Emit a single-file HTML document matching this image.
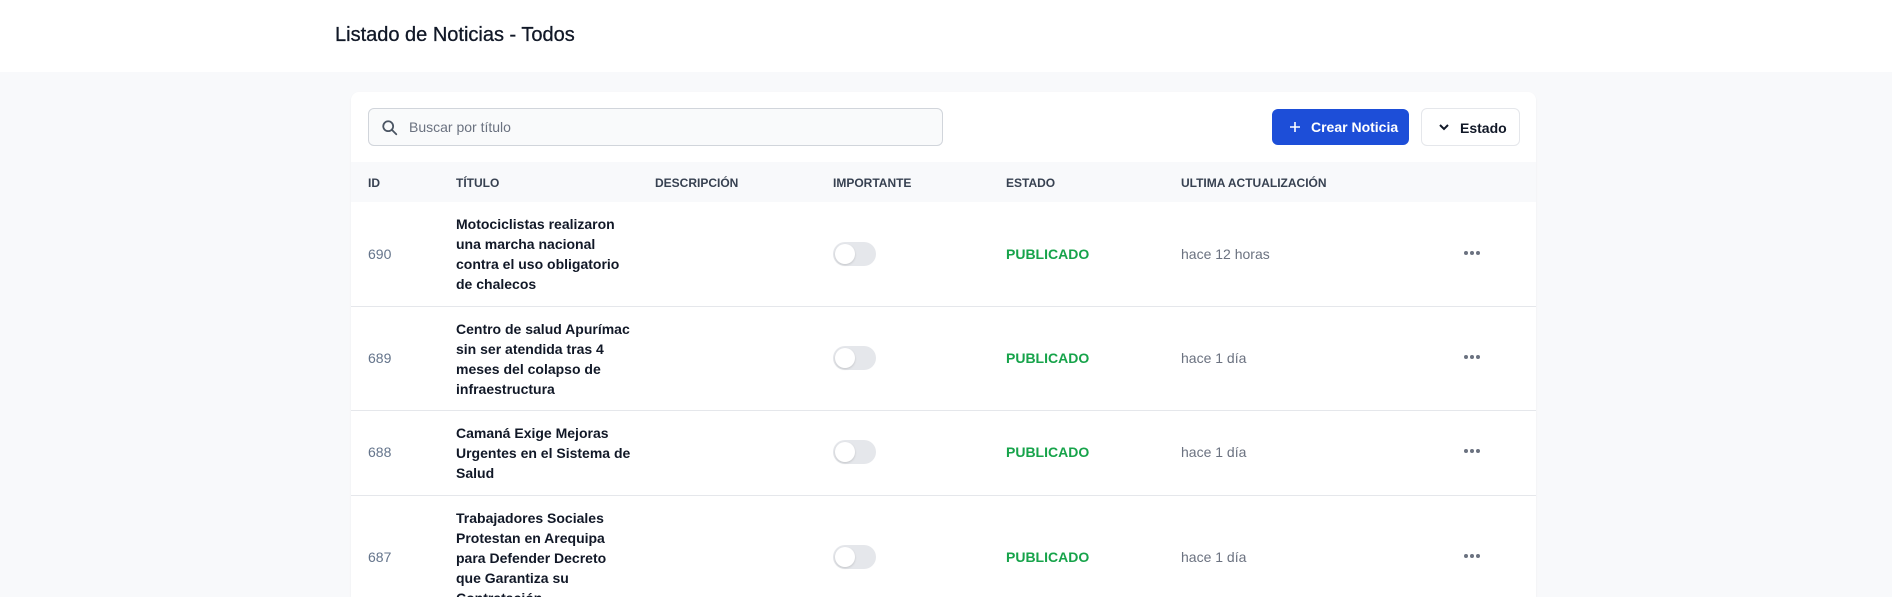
<!DOCTYPE html>
<html style="overflow:hidden;width:1892px;height:597px"><head><meta charset="utf-8"><style>
*{box-sizing:border-box;margin:0;padding:0}
body{width:1892px;height:597px;overflow:hidden;background:#f8f9fb;font-family:"Liberation Sans",sans-serif;position:relative}
.top{position:absolute;left:0;top:0;width:1892px;height:72px;background:#fff}
.top h1{position:absolute;left:335px;top:24px;font-size:20px;font-weight:normal;color:#111827;-webkit-text-stroke:0.3px #111827}
.card{position:absolute;left:351px;top:92px;width:1185px;height:505px;background:#fff;border-radius:8px 8px 0 0;box-shadow:0 1px 2px rgba(0,0,0,.05);overflow:hidden}
.search{position:absolute;left:17px;top:16px;width:575px;height:38px;border:1px solid #d1d5db;border-radius:6px;background:#f9fafb}
.search svg{position:absolute;left:12px;top:10px}
.search span{position:absolute;left:40px;top:10px;font-size:14px;color:#6b7280}
.btn{position:absolute;top:17px;height:36px;border-radius:6px;font-size:14px;font-weight:bold}
.crear{left:921px;width:137px;background:#1d4ed8;color:#fff}
.estado{left:1070px;top:16px;width:99px;height:38px;border:1px solid #e5e7eb;background:#fff;color:#111827}
.btn span{position:absolute;top:10px}
.thead{position:absolute;left:0;top:70px;width:1185px;height:40px;background:#f8f9fb}
.th{position:absolute;top:14px;font-size:12px;font-weight:bold;color:#374151}
.row{position:absolute;left:0;width:1185px;border-bottom:1px solid #e5e7eb}
.row .id{position:absolute;left:17px;font-size:14px;color:#64748b}
.row .t{position:absolute;left:105px;top:12px;width:175px;font-size:14px;font-weight:bold;color:#111827;line-height:20px}
.tog{position:absolute;left:482px;width:43px;height:24px;border-radius:12px;background:#e5e7eb}
.tog:after{content:"";position:absolute;left:2px;top:2px;width:20px;height:20px;border-radius:50%;background:#fff;box-shadow:0 1px 2px rgba(0,0,0,.15)}
.pub{position:absolute;left:655px;font-size:14px;font-weight:bold;color:#16a34a}
.time{position:absolute;left:830px;font-size:14px;color:#6b7280}
.dots{position:absolute;left:1113px;width:20px;height:6px}
.dots i{float:left;width:4px;height:4px;border-radius:50%;background:#6b7280;margin-right:2px}
</style></head><body>
<div class="top"><h1>Listado de Noticias - Todos</h1></div>
<div class="card">
 <div class="search"><svg width="18" height="18" viewBox="0 0 20 20"><circle cx="8" cy="8" r="5.5" fill="none" stroke="#4b5563" stroke-width="2"/><path d="M12 12l5 5" stroke="#4b5563" stroke-width="2" stroke-linecap="round"/></svg><span>Buscar por título</span></div>
 <div class="btn crear"><svg style="position:absolute;left:17px;top:12px" width="12" height="12" viewBox="0 0 12 12"><path d="M6 1v10M1 6h10" stroke="#fff" stroke-width="1.6"/></svg><span style="left:39px">Crear Noticia</span></div>
 <div class="btn estado"><svg style="position:absolute;left:17px;top:15px" width="10" height="7" viewBox="0 0 10 7"><path d="M1 1l4 4 4-4" fill="none" stroke="#111827" stroke-width="2"/></svg><span style="left:38px;top:11px">Estado</span></div>
 <div class="thead">
  <div class="th" style="left:17px">ID</div>
  <div class="th" style="left:105px">TÍTULO</div>
  <div class="th" style="left:304px">DESCRIPCIÓN</div>
  <div class="th" style="left:482px">IMPORTANTE</div>
  <div class="th" style="left:655px">ESTADO</div>
  <div class="th" style="left:830px">ULTIMA ACTUALIZACIÓN</div>
 </div>
 <div class="row" style="top:110px;height:105px">
  <div class="id" style="top:44px">690</div>
  <div class="t">Motociclistas realizaron una marcha nacional contra el uso obligatorio de chalecos</div>
  <div class="tog" style="top:40px"></div>
  <div class="pub" style="top:44px">PUBLICADO</div>
  <div class="time" style="top:44px">hace 12 horas</div>
  <div class="dots" style="top:49px"><i></i><i></i><i></i></div>
 </div>
 <div class="row" style="top:215px;height:104px">
  <div class="id" style="top:43px">689</div>
  <div class="t">Centro de salud Apurímac sin ser atendida tras 4 meses del colapso de infraestructura</div>
  <div class="tog" style="top:39px"></div>
  <div class="pub" style="top:43px">PUBLICADO</div>
  <div class="time" style="top:43px">hace 1 día</div>
  <div class="dots" style="top:48px"><i></i><i></i><i></i></div>
 </div>
 <div class="row" style="top:319px;height:85px">
  <div class="id" style="top:33px">688</div>
  <div class="t">Camaná Exige Mejoras Urgentes en el Sistema de Salud</div>
  <div class="tog" style="top:29px"></div>
  <div class="pub" style="top:33px">PUBLICADO</div>
  <div class="time" style="top:33px">hace 1 día</div>
  <div class="dots" style="top:38px"><i></i><i></i><i></i></div>
 </div>
 <div class="row" style="top:404px;height:124px">
  <div class="id" style="top:53px">687</div>
  <div class="t">Trabajadores Sociales Protestan en Arequipa para Defender Decreto que Garantiza su Contratación</div>
  <div class="tog" style="top:49px"></div>
  <div class="pub" style="top:53px">PUBLICADO</div>
  <div class="time" style="top:53px">hace 1 día</div>
  <div class="dots" style="top:58px"><i></i><i></i><i></i></div>
 </div>
</div>
</body></html>
